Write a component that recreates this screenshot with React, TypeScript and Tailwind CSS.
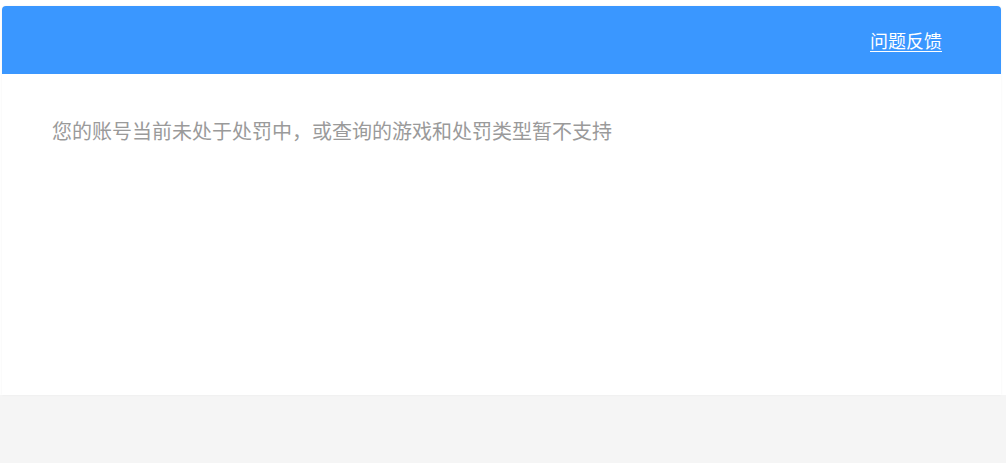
export default function App() {
  return (
    <div
      className="h-[463px] w-full bg-[#f5f5f5] overflow-hidden"
      style={{ fontFamily: '"Microsoft YaHei", "Noto Sans CJK SC", sans-serif' }}
    >
      <div className="bg-white pt-[6px] pl-[2px] pr-[5px]">
        {/* 卡片 */}
        <div className="h-[389px] bg-white rounded-t-[4px] shadow-[0_0_3px_rgba(0,0,0,0.05)] flex flex-col">
          <div className="h-[68px] bg-[#3a97ff] rounded-t-[4px] flex items-center justify-end pr-[59px]">
            <a href="#" className="text-white text-[18px] underline underline-offset-[3px] leading-none">
              问题反馈
            </a>
          </div>
          <div className="flex-1 pl-[50px] pt-[42px]">
            <p className="text-[20px] leading-[30px] text-[#9a9a9a]">
              您的账号当前未处于处罚中，或查询的游戏和处罚类型暂不支持
            </p>
          </div>
        </div>
      </div>
    </div>
  );
}
